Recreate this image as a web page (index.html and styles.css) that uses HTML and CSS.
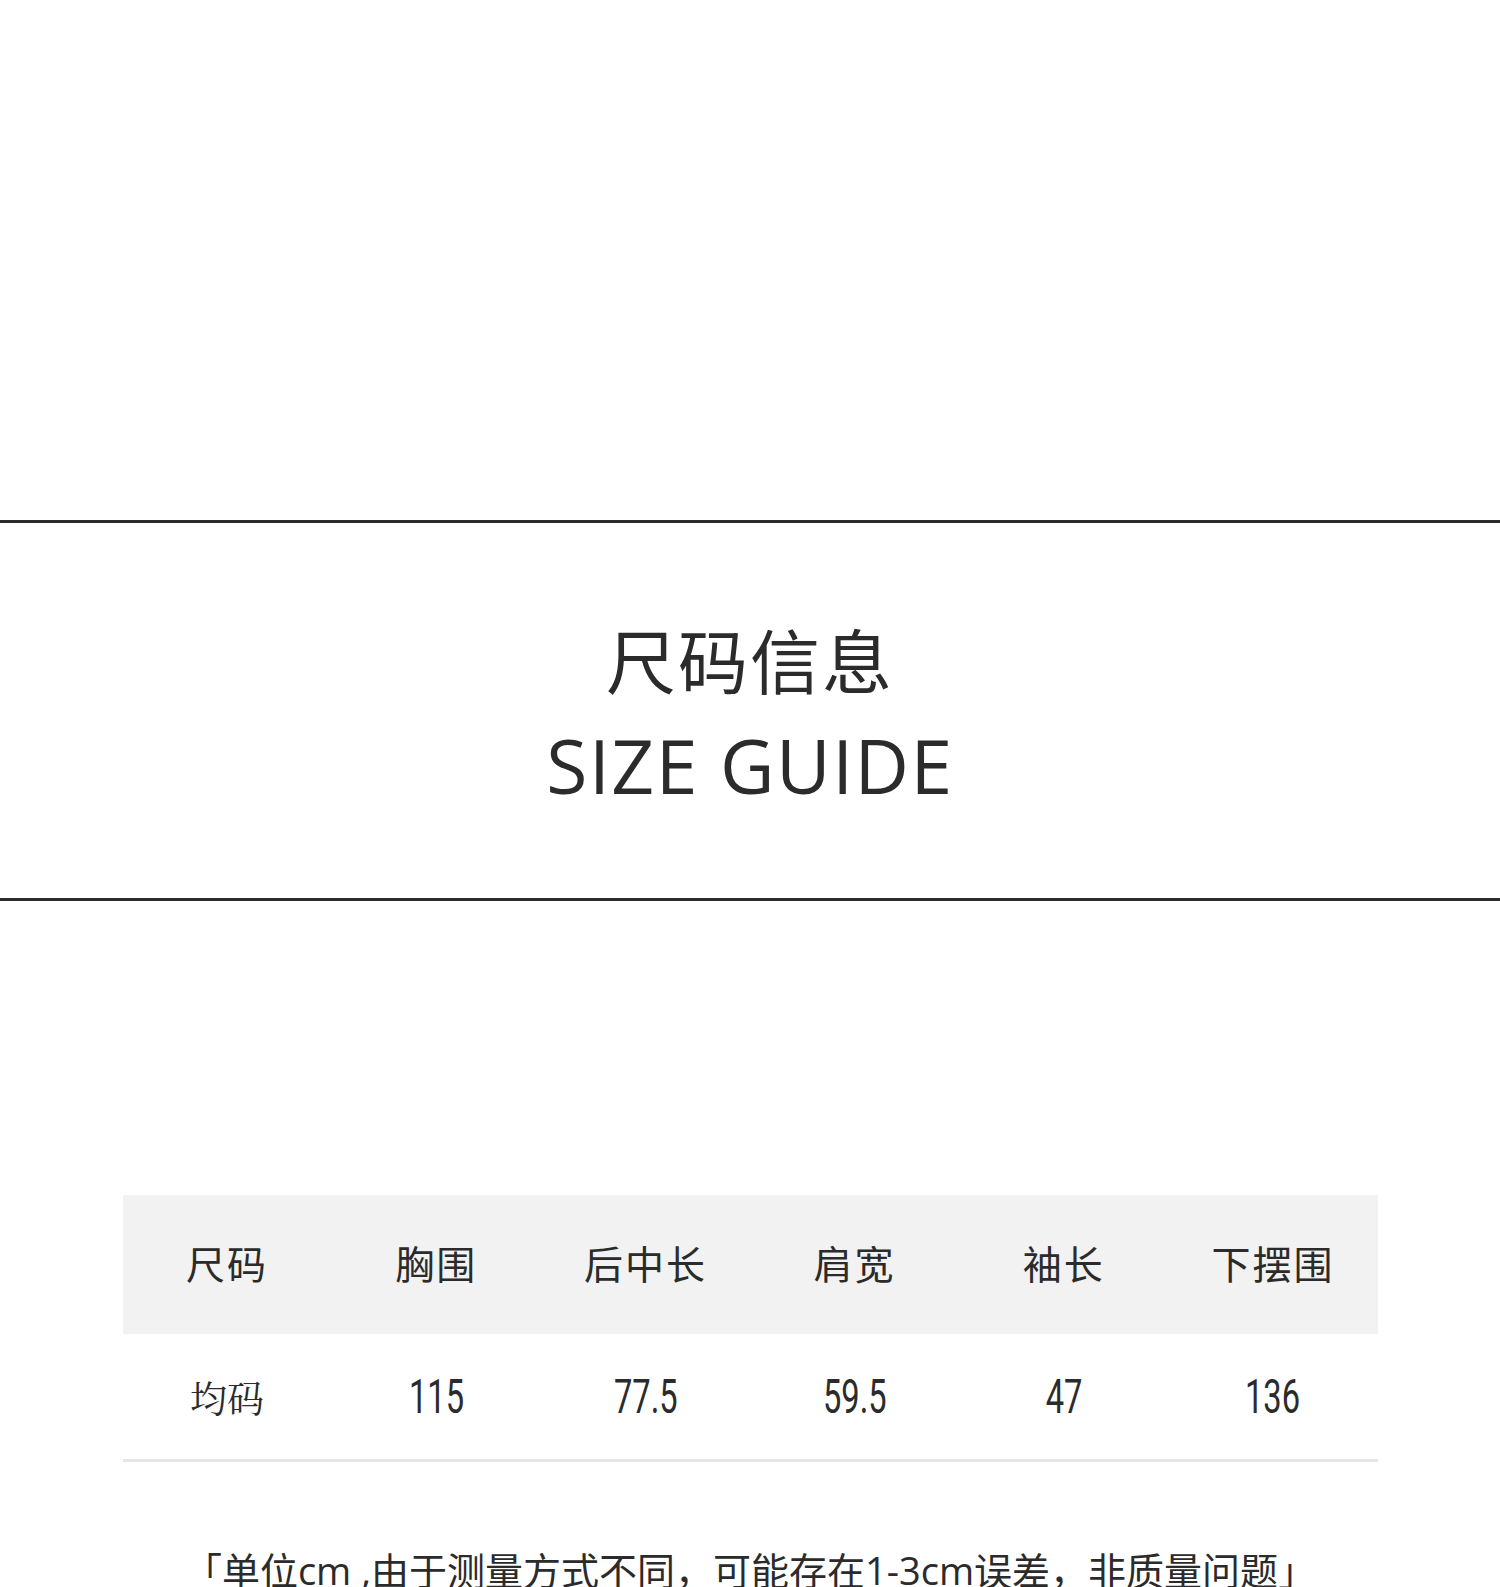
FILE: index.html
```html
<!DOCTYPE html>
<html lang="zh-CN">
<head>
<meta charset="utf-8">
<title>尺码信息 SIZE GUIDE</title>
<link rel="stylesheet" href="styles.css">
</head>
<body>
<div class="page">
  <div class="spacer-top"></div>
  <section class="banner">
    <h1 class="title-cn">尺码信息</h1>
    <h2 class="title-en">SIZE GUIDE</h2>
  </section>
  <div class="spacer-mid"></div>
  <div class="size-table">
    <div class="row head">
      <div class="cell">尺码</div>
      <div class="cell">胸围</div>
      <div class="cell">后中长</div>
      <div class="cell">肩宽</div>
      <div class="cell">袖长</div>
      <div class="cell">下摆围</div>
    </div>
    <div class="row body">
      <div class="cell name">均码</div>
      <div class="cell num"><span>115</span></div>
      <div class="cell num"><span>77.5</span></div>
      <div class="cell num"><span>59.5</span></div>
      <div class="cell num"><span>47</span></div>
      <div class="cell num"><span>136</span></div>
    </div>
  </div>
  <p class="note">「单位cm ,由于测量方式不同，可能存在1-3cm误差，非质量问题」</p>
</div>
</body>
</html>
```
FILE: styles.css
```css
html, body {
  margin: 0;
  padding: 0;
  background: #ffffff;
}
body {
  font-family: "Noto Sans CJK SC", "Noto Sans", sans-serif;
  color: #2b2b2b;
}
.page {
  width: 1500px;
  height: 1587px;
  overflow: hidden;
}
.spacer-top {
  height: 520px;
}
.banner {
  border-top: 3px solid #2b2b2b;
  border-bottom: 3px solid #2b2b2b;
  height: 375px;
  display: flex;
  flex-direction: column;
  align-items: center;
  box-sizing: content-box;
}
.title-cn {
  margin: 96px 0 0 0;
  font-family: "Noto Sans CJK SC", sans-serif;
  font-weight: 400;
  font-size: 70px;
  line-height: 80px;
  letter-spacing: 2px;
  color: #2b2b2b;
}
.title-en {
  margin: 26px 0 0 0;
  font-family: "Open Sans", "Noto Sans", sans-serif;
  font-weight: 400;
  font-size: 75px;
  line-height: 80px;
  color: #2b2b2b;
  letter-spacing: 1.5px;
}
.spacer-mid {
  height: 294px;
}
.size-table {
  width: 1255px;
  margin: 0 auto;
}
.row {
  display: grid;
  grid-template-columns: repeat(6, 1fr);
  align-items: center;
}
.row.head {
  background: #f2f2f2;
  height: 139px;
}
.row.body {
  height: 125px;
  border-bottom: 3px solid #e6e6e6;
}
.cell {
  text-align: center;
  color: #2b2b2b;
}
.head .cell {
  font-family: "Noto Sans CJK SC", sans-serif;
  font-size: 39px;
  letter-spacing: 2px;
  padding-bottom: 6px;
}
.body .cell.name {
  font-family: "Noto Serif CJK SC", "AR PL UMing CN", serif;
  font-size: 37px;
}
.body .cell.num span {
  display: inline-block;
  font-family: "Roboto", "Lato", sans-serif;
  font-weight: 400;
  font-size: 48px;
  line-height: 60px;
  transform: scaleX(0.68);
}
.note {
  margin: 84px 0 0 0;
  text-align: center;
  font-family: "Open Sans", "Noto Sans CJK SC", sans-serif;
  font-size: 38px;
  line-height: 48px;
  white-space: nowrap;
  color: #2b2b2b;
}
```
